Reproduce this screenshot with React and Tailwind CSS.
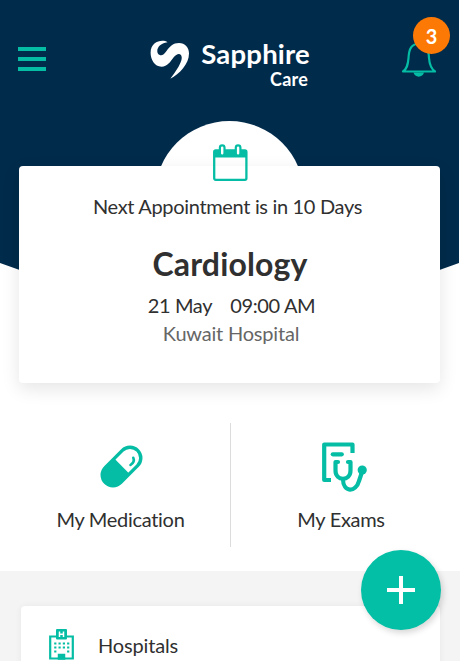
const TEAL = '#05bda4';

function Brand() {
  return (
    <div className="flex items-start gap-[11px] text-white">
      <svg className="mt-[6px] h-[39px] w-[40px]" viewBox="0 0 40 39" fill="none">
        <path
          d="M17.500 2.300C12.500 -1.200 .600 1.500 .600 12.800C.600 19.500 4.500 26.700 11.500 26.700C17.500 26.700 20.500 21.500 23.500 17.500C25.500 15 27.500 13.800 29.200 14C31.800 14.500 32.200 17.500 31.300 20.500C29.500 26 26 31 20.300 38.800C29.500 34 39 24 39 13.500C39 7.500 35 3 29 3C23 3 20 6.500 16.500 11C14 14.800 11.500 16.300 9.300 14.800C5 12 7.500 3.500 17.500 2.300Z"
          fill="currentColor"
        />
      </svg>
      <div className="flex w-[108px] flex-col items-end">
        <span className="-mr-[1px] text-[27.500px] font-bold leading-[40px] tracking-[0.2px]">Sapphire</span>
        <span className="-mt-[5px] mr-[1px] text-[18px] font-bold leading-[20px] tracking-[0.2px]">Care</span>
      </div>
    </div>
  );
}

function Bell() {
  return (
    <div className="relative h-[60px] w-[50px]">
      <svg className="absolute left-0 top-[22px]" width="36" height="38" viewBox="0 0 36 38" fill="none" stroke={TEAL} strokeWidth="2.200">
        <path d="M2 32.500C6 29.500 7 26 7.500 19C8 9 11 5 18 4.500C25 5 27.500 9 28 19C28.500 26 30 29.500 34 32.500Z" strokeLinejoin="round" />
        <path d="M12.500 33.500C13.500 39 22 39 23 33.500Z" fill={TEAL} stroke="none" />
      </svg>
      <span className="absolute left-[12px] top-0 flex h-[37px] w-[37px] items-center justify-center rounded-full bg-[#fd7905] text-[20px] font-bold text-white">3</span>
    </div>
  );
}

function Calendar() {
  return (
    <svg width="35" height="37" viewBox="0 0 35 37" fill="none">
      <rect x="1.200" y="6.500" width="32.200" height="29.300" rx="1.500" stroke={TEAL} strokeWidth="2.300" />
      <path d="M1 6.500H34V13.500H1Z" fill={TEAL} />
      <rect x="6.900" y="1.300" width="4.600" height="10.200" rx="2.300" fill="#fff" stroke={TEAL} strokeWidth="2.200" />
      <rect x="22.800" y="1.300" width="4.600" height="10.200" rx="2.300" fill="#fff" stroke={TEAL} strokeWidth="2.200" />
    </svg>
  );
}

function Pill() {
  return (
    <svg className="-mt-[1px]" width="43" height="43" viewBox="0 0 43 43" fill="none">
      <g transform="translate(21.500 21.500) rotate(-45)">
        <rect x="-22.800" y="-10.800" width="45.600" height="21.600" rx="10.800" stroke={TEAL} strokeWidth="3.400" />
        <path d="M.500 -11H-12A11 11 0 0 0 -12 11H.500Z" fill={TEAL} />
      </g>
      <path d="M33.300 12.800C34.500 15.500 33.300 18.200 30.500 20" stroke={TEAL} strokeWidth="2.600" strokeLinecap="round" />
    </svg>
  );
}

function Exams() {
  return (
    <svg className="ml-[5px]" width="45" height="50" viewBox="0 0 45 50" fill="none" stroke={TEAL} strokeWidth="4.200" strokeLinejoin="round">
      <path d="M9 38H2.200V2.500H30.500V11" />
      <path d="M10.800 12.300H19.800" strokeLinecap="round" />
      <path d="M16 20H13.500V28.500C13.500 39.500 28.500 39.500 28.500 28.500V20H26" strokeLinecap="round" />
      <path d="M21 37C21 51 34 50.500 37 39L40 30" />
      <circle cx="40.200" cy="28" r="4.600" fill={TEAL} stroke="none" />
    </svg>
  );
}

function Hospital() {
  return (
    <svg width="25" height="31" viewBox="0 0 25 31" fill="none" stroke={TEAL}>
      <path d="M7 7.500H1.200V29.500H23.800V7.500H18" strokeWidth="2.200" />
      <rect x="7" y="0" width="11" height="10.500" rx="1" fill={TEAL} stroke="none" />
      <path d="M10.500 2.500V8M14.500 2.500V8M10.500 5.200H14.500" stroke="#fff" strokeWidth="1.500" />
      <path d="M5.200 14.500H21M5.200 18.500H21" strokeWidth="2" strokeDasharray="2.200 2.100" />
      <path d="M5.200 22.500H7.400M18.100 22.500H20.300" strokeWidth="2" />
      <path d="M9.500 30V25.500H15.500V30Z" fill={TEAL} strokeWidth="1.500" />
    </svg>
  );
}

function Shortcut({ icon, label }) {
  return (
    <div className="flex h-full flex-col items-center justify-between pb-[14px] pt-[18px] text-[20px] leading-[28px] tracking-[-0.3px]">
      <div className="flex h-[52px] items-center">{icon}</div>
      <span className="mr-[1px]">{label}</span>
    </div>
  );
}

export default function App() {
  return (
    <div className="relative h-[661px] w-[460px] overflow-hidden bg-white font-['Lato',sans-serif] text-[#303030]">
      <svg className="absolute left-0 top-0" width="459" height="330" viewBox="0 0 459 330">
        <path d="M0 0H459V263Q229.500 350 0 263Z" fill="#012b4b" />
      </svg>

      <header className="relative flex h-[166px] items-start pl-[18px] pr-[9px] pt-[17px]">
        <button className="mt-[30px] flex w-[28px] flex-col gap-[6.500px]" aria-label="Menu">
          <span className="h-[3.500px] w-full bg-[#05bda4]" />
          <span className="h-[3.500px] w-full bg-[#05bda4]" />
          <span className="h-[3.500px] w-full bg-[#05bda4]" />
        </button>
        <div className="ml-[104px] mt-[17px]">
          <Brand />
        </div>
        <div className="ml-auto">
          <Bell />
        </div>
      </header>

      <div className="absolute left-[155px] top-[121px] h-[149px] w-[149px] rounded-full bg-white" />

      <section className="relative ml-[19px] flex h-[217px] w-[421px] flex-col items-center rounded-[4px] bg-white pt-[26px] shadow-[0_6px_18px_rgba(0,0,0,0.1)]">
        <div className="absolute left-[194px] top-[-22px]">
          <Calendar />
        </div>
        <p className="-ml-[4px] text-[20px] leading-[28px] tracking-[-0.33px]">Next Appointment is in 10 Days</p>
        <h1 className="ml-[1px] mt-6 text-[32px] font-bold leading-[40px] tracking-[0.15px]">Cardiology</h1>
        <p className="ml-[4px] mt-[7px] flex gap-[18px] text-[20px] leading-[28px] tracking-[-0.35px]">
          <span>21 May</span>
          <span>09:00 AM</span>
        </p>
        <p className="ml-[3px] text-[20px] leading-[28px] tracking-[-0.2px] text-[#666]">Kuwait Hospital</p>
      </section>

      <nav className="ml-3 mr-2 mt-10 flex h-[124px]">
        <div className="w-[218px]">
          <Shortcut icon={<Pill />} label="My Medication" />
        </div>
        <div className="w-px bg-[#dcdcdc]" />
        <div className="flex-1">
          <Shortcut icon={<Exams />} label="My Exams" />
        </div>
      </nav>

      <section className="mt-6 h-[90px] bg-[#f4f4f4] pl-[21px] pt-[35px]">
        <div className="flex h-[70px] w-[419px] items-start rounded-[4px] bg-white pl-[28px] pt-[23px] shadow-[0_0_6px_rgba(0,0,0,0.06)]">
          <Hospital />
          <span className="ml-6 mt-[2px] text-[20px] leading-[28px] tracking-[-0.15px]">Hospitals</span>
        </div>
      </section>

      <button
        className="absolute left-[360.500px] top-[550px] flex h-[80px] w-[80px] items-center justify-center rounded-full bg-[#02bfa5] shadow-[2px_3px_6px_rgba(0,0,0,0.16)]"
        aria-label="Add"
      >
        <svg width="28" height="28" viewBox="0 0 28 28" stroke="#fff" strokeWidth="4">
          <path d="M14 0V28M0 14H28" />
        </svg>
      </button>
    </div>
  );
}
